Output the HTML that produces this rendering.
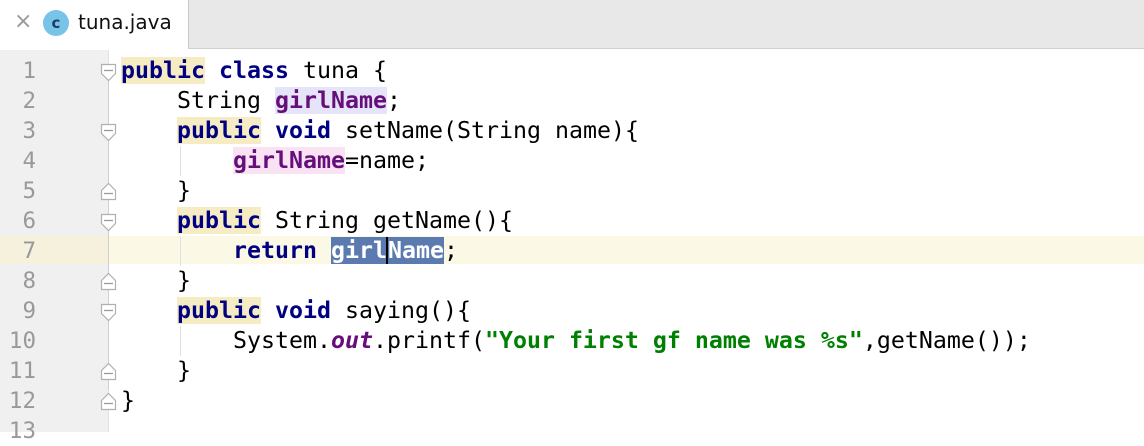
<!DOCTYPE html>
<html><head><style>
body{margin:0;width:1144px;height:432px;overflow:hidden;background:#fff;position:relative;font-family:"DejaVu Sans Mono",monospace}
.tabbar{position:absolute;left:0;top:0;width:1144px;height:48px;background:#e8e8e8;border-bottom:1px solid #d0d0d0}
.tab{position:absolute;left:0;top:0;width:188px;height:49px;background:#fff;border-right:1px solid #c8c8c8}
.tab .x{position:absolute;left:14px;top:9px;font:22px "DejaVu Sans",sans-serif;color:#999}
.tab .c{position:absolute;left:43px;top:10px;width:26px;height:26px;border-radius:13px;background:#78c3e8;color:#1b3d66;font:bold 15px "DejaVu Sans",sans-serif;text-align:center;line-height:26px}
.tab .n{position:absolute;left:78px;top:10px;font:20px "DejaVu Sans",sans-serif;color:#111}
.gutter{position:absolute;left:0;top:50px;width:108px;height:382px;background:#f0f0f0;border-right:1px solid #e2e2e2}
.hl{position:absolute;left:0;top:236px;width:1144px;height:28px;background:#fcf8e6}
.hlg{position:absolute;left:0;top:236px;width:108px;height:28px;background:#f6f1dc}
.ln{position:absolute;left:0;width:36px;text-align:right;color:#999;font-size:22.5px;line-height:30px}
.code{position:absolute;left:121px;font-size:23.25px;line-height:30px;white-space:pre;color:#000}
.k{color:#000080;font-weight:bold}
.f{color:#660e7a;font-weight:bold}
.s{color:#008000;font-weight:bold}
.y{background:#f5ecc4}
.sel{background:#5a7ab0;color:#fff}
.guide{position:absolute;width:1px;background:#e0e0e0}
</style></head><body>
<div class="tabbar"></div>
<div class="tab"><span class="x">×</span><span class="c">c</span><span class="n">tuna.java</span></div>
<div class="gutter"></div>
<div class="hl"></div><div class="hlg"></div>
<div class="guide" style="left:180px;top:146px;height:30px"></div>
<div class="guide" style="left:180px;top:236px;height:30px"></div>
<div class="guide" style="left:180px;top:326px;height:30px"></div>
<div class="guide" style="left:108px;top:80px;height:310px;background:#cfcfcf"></div>
<div style="position:absolute;top:56px;left:0">
<div class="ln" style="top:0">1</div><div class="ln" style="top:30px">2</div><div class="ln" style="top:60px">3</div><div class="ln" style="top:90px">4</div><div class="ln" style="top:120px">5</div><div class="ln" style="top:150px">6</div><div class="ln" style="top:180px">7</div><div class="ln" style="top:210px">8</div><div class="ln" style="top:240px">9</div><div class="ln" style="top:270px">10</div><div class="ln" style="top:300px">11</div><div class="ln" style="top:330px">12</div><div class="ln" style="top:360px">13</div>
</div>
<svg style="position:absolute;left:0;top:0" width="1144" height="432">
<g fill="#fff" stroke="#b0b0b0" stroke-width="1.2">
<path d="M101.5 64.5h14v9l-7 7-7-7z"/><path d="M101.5 124.5h14v9l-7 7-7-7z"/><path d="M101.5 214.5h14v9l-7 7-7-7z"/><path d="M101.5 304.5h14v9l-7 7-7-7z"/>
<path d="M101.5 199.5h14v-9l-7-7-7 7z"/><path d="M101.5 289.5h14v-9l-7-7-7 7z"/><path d="M101.5 379.5h14v-9l-7-7-7 7z"/><path d="M101.5 409.5h14v-9l-7-7-7 7z"/>
</g>
<g stroke="#999" stroke-width="1.2"><path d="M104 70.5h9M104 130.5h9M104 220.5h9M104 310.5h9M104 193.5h9M104 283.5h9M104 373.5h9M104 403.5h9"/></g>
</svg>
<div class="code" style="top:56px"><span class="k y">public</span> <span class="k">class</span> tuna {
    String <span class="f" style="background:#e6e4f8">girlName</span>;
    <span class="k y">public</span> <span class="k">void</span> setName(String name){
        <span class="f" style="background:#f8e2f4">girlName</span>=name;
    }
    <span class="k y">public</span> String getName(){
        <span class="k">return</span> <span class="f sel">girl<span style="border-left:2px solid #000;margin-left:-1px">N</span>ame</span>;
    }
    <span class="k y">public</span> <span class="k">void</span> saying(){
        System.<i class="f">out</i>.printf(<span class="s">"Your first gf name was %s"</span>,getName());
    }
}</div>
</body></html>
